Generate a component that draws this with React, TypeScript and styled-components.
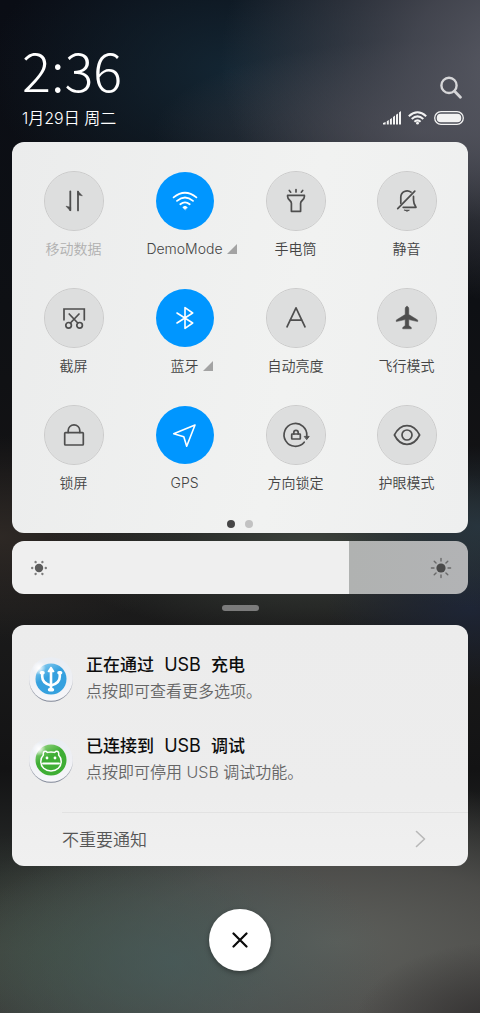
import React, { useState } from 'react';
import styled, { createGlobalStyle } from 'styled-components';

const GlobalStyle = createGlobalStyle`
  *, *::before, *::after { box-sizing: border-box; }
  body {
    margin: 0;
    background: #1b1b1c;
    font-family: Inter, "Noto Sans CJK SC", sans-serif;
    font-weight: 350;
    color: #4a4a4a;
  }
  button {
    margin: 0;
    padding: 0;
    border: 0;
    background: none;
    color: inherit;
    font: inherit;
    cursor: pointer;
  }
`;

const Screen = styled.main`
  display: flex;
  flex-direction: column;
  min-height: 100vh;
  padding: 30px 12px 42px;
  background:
    radial-gradient(ellipse 66% 24% at 112% 6%, #5c5e68 0%, rgba(84, 86, 96, 0.75) 40%, rgba(84, 86, 96, 0) 100%),
    radial-gradient(ellipse 56% 9% at 88% 13%, rgba(84, 82, 90, 0.7) 0%, rgba(84, 82, 90, 0) 100%),
    radial-gradient(ellipse 50% 15% at 48% 7%, rgba(20, 40, 54, 0.9) 0%, rgba(20, 40, 54, 0) 100%),
    radial-gradient(ellipse 30% 8% at 100% 52%, rgba(40, 54, 64, 0.9) 0%, rgba(40, 54, 64, 0) 100%),
    radial-gradient(ellipse 30% 8% at 98% 60%, rgba(30, 38, 56, 0.9) 0%, rgba(30, 38, 56, 0) 100%),
    radial-gradient(ellipse 55% 9% at 65% 54%, rgba(64, 70, 64, 0.95) 0%, rgba(64, 70, 64, 0) 100%),
    radial-gradient(ellipse 40% 10% at 0% 53%, rgba(48, 42, 38, 0.9) 0%, rgba(48, 42, 38, 0) 100%),
    radial-gradient(ellipse 30% 8% at 104% 101%, rgba(48, 46, 46, 0.9) 0%, rgba(48, 46, 46, 0) 100%),
    radial-gradient(ellipse 45% 12% at 36% 95%, rgba(70, 92, 92, 0.7) 0%, rgba(70, 92, 92, 0) 100%),
    radial-gradient(ellipse 45% 12% at 12% 94%, rgba(62, 76, 64, 0.7) 0%, rgba(62, 76, 64, 0) 100%),
    radial-gradient(ellipse 80% 16% at 70% 93%, #5c5e5a 0%, rgba(88, 87, 84, 0.75) 50%, rgba(80, 80, 80, 0) 100%),
    linear-gradient(180deg, #0a0d15 0%, #0e1014 30%, #121214 45%, #1b1b1b 60%, #131314 76%, #272a29 86%, #3c3d3b 94%, #3a3a3a 100%);
`;

const Header = styled.header`
  display: flex;
  justify-content: space-between;
  align-items: flex-end;
  height: 112px;
  padding: 0 4px 14px 10px;
  color: #fff;
`;

const Clock = styled.div`
  display: flex;
  flex-direction: column;
  gap: 9px;
`;

const Time = styled.time`
  font-family: "Noto Sans CJK SC", sans-serif;
  font-weight: 300;
  font-size: 54px;
  line-height: 60px;
`;

const DateText = styled.span`
  font-size: 16px;
  line-height: 20px;
`;

const HeaderTools = styled.div`
  display: flex;
  flex-direction: column;
  align-items: flex-end;
  gap: 12px;
  padding-bottom: 3px;
`;

const SearchButton = styled.button`
  display: flex;
  padding-right: 2px;
  color: #d6d6d8;
`;

const StatusRow = styled.div`
  display: flex;
  align-items: center;
  gap: 7px;
`;

const Panel = styled.section`
  border-radius: 12px;
  background: linear-gradient(100deg, #ebecec 0%, #f1f2f1 60%, #eeefef 100%);
`;

const TogglePanel = styled(Panel)`
  display: flex;
  flex-direction: column;
  gap: 27px;
  padding: 29px 6px 5px;
`;

const ToggleGrid = styled.div`
  display: grid;
  grid-template-columns: repeat(4, 1fr);
  row-gap: 29px;
`;

const Toggle = styled.button`
  display: flex;
  flex-direction: column;
  align-items: center;
  gap: 8px;
`;

const Disc = styled.span<{ $on: boolean }>`
  display: grid;
  place-items: center;
  width: 60px;
  height: 60px;
  border-radius: 50%;
  border: 1px solid ${p => (p.$on ? 'transparent' : '#cbcbcb')};
  background: ${p => (p.$on ? '#0096ff' : '#dddede')};
  background-clip: padding-box;
  color: ${p => (p.$on ? '#fff' : '#4e4e4e')};
`;

const ToggleLabel = styled.span<{ $muted?: boolean }>`
  display: grid;
  grid-template-columns: 1fr auto 1fr;
  column-gap: 4px;
  align-items: center;
  width: 100%;
  font-size: 14px;
  line-height: 20px;
  white-space: nowrap;
  color: ${p => (p.$muted ? '#b0b0b0' : '#444')};
`;

const LabelText = styled.span`
  grid-column: 2;
`;

const Expand = styled.svg`
  grid-column: 3;
`;

const Pager = styled.div`
  display: flex;
  justify-content: center;
  gap: 10px;
`;

const PageDot = styled.span<{ $current?: boolean }>`
  width: 8px;
  height: 8px;
  border-radius: 50%;
  background: ${p => (p.$current ? '#464646' : '#c2c2c2')};
`;

const Brightness = styled.label`
  display: grid;
  grid-template-columns: auto 1fr auto;
  align-items: center;
  height: 53px;
  margin-top: 8px;
  border-radius: 12px;
  overflow: hidden;
`;

const BrightnessRange = styled.input<{ $level: number }>`
  grid-area: 1 / 1 / 2 / 4;
  appearance: none;
  width: 100%;
  height: 53px;
  margin: 0;
  background: linear-gradient(
    to right,
    #efefef ${p => p.$level}%,
    #b0b2b1 ${p => p.$level}%,
    #b2b3b5 100%
  );
  &::-webkit-slider-thumb {
    appearance: none;
    width: 1px;
    height: 53px;
    background: transparent;
  }
`;

const BrightnessIcon = styled.svg<{ $end?: boolean }>`
  grid-row: 1;
  grid-column: ${p => (p.$end ? 3 : 1)};
  margin: 0 16px;
  pointer-events: none;
  color: #4a4a4a;
  z-index: 1;
`;

const Handle = styled.div`
  align-self: center;
  width: 37px;
  height: 6px;
  margin: 11px 0 14px;
  border-radius: 3px;
  background: #7b7b7b;
`;

const NoticePanel = styled(Panel)`
  padding-top: 13px;
  overflow: hidden;
  background: linear-gradient(180deg, #ececec 0%, #ededed 70%, #f0f0f0 100%);
`;

const NoticeList = styled.ul`
  margin: 0;
  padding: 0 0 12px;
  list-style: none;
`;

const Notice = styled.li`
  display: flex;
  align-items: center;
  gap: 12px;
  height: 81px;
  padding: 0 16px;
`;

const NoticeText = styled.div`
  display: flex;
  flex-direction: column;
  padding-bottom: 2px;
`;

const NoticeTitle = styled.h2`
  margin: 0;
  font-size: 17px;
  line-height: 26px;
  font-weight: 500;
  color: #0c0c0c;
  white-space: pre;
`;

const Latin = styled.span`
  font-size: 18px;
  font-weight: 400;
`;

const NoticeBody = styled.p`
  margin: 0;
  font-size: 16px;
  line-height: 26px;
  color: #666;
`;

const MoreRow = styled.button`
  display: flex;
  justify-content: space-between;
  align-items: center;
  width: calc(100% - 50px);
  height: 54px;
  margin-left: 50px;
  padding: 0 42px 2px 0;
  border-top: 1px solid #e2e2e2;
  font-size: 17px;
  color: #565656;
`;

const CloseButton = styled.button`
  display: grid;
  place-items: center;
  align-self: center;
  width: 62px;
  height: 62px;
  margin-top: 43px;
  border-radius: 50%;
  background: #fff;
  color: #0a0a0a;
  box-shadow: 0 2px 5px rgba(0, 0, 0, 0.35);
`;

const Glyph = ({ children, width = 1.7 }: { children: React.ReactNode; width?: number }) => (
  <svg
    width="30"
    height="30"
    viewBox="-15 -15 30 30"
    fill="none"
    stroke="currentColor"
    strokeWidth={width}
    strokeLinecap="round"
    strokeLinejoin="round"
    aria-hidden="true"
  >
    {children}
  </svg>
);

type ToggleItem = {
  label: string;
  icon: React.ReactNode;
  on?: boolean;
  muted?: boolean;
  expandable?: boolean;
};

const toggles: ToggleItem[] = [
  {
    label: '移动数据',
    muted: true,
    icon: (
      <Glyph width={1.8}>
        <path d="M-3.7 -9.6V9.2" />
        <path d="M4 9.4V-9.4" />
        <path d="M-3.7 9.8L-8 5.2L-3.7 6.2Z" fill="currentColor" strokeWidth={0.6} />
        <path d="M4 -9.8L8.3 -5.2L4 -6.2Z" fill="currentColor" strokeWidth={0.6} />
      </Glyph>
    ),
  },
  {
    label: 'DemoMode',
    on: true,
    expandable: true,
    icon: (
      <Glyph width={1.8}>
        <path d="M-11.4 -3.6Q0 -12.8 11.4 -3.6" />
        <path d="M-8 -0.1Q0 -6.8 8 -0.1" />
        <path d="M-4.7 3.3Q0 -0.6 4.7 3.3" />
        <path d="M0 8.6L-2.3 6.4Q0 3.8 2.3 6.4Z" fill="currentColor" strokeWidth={0.5} />
      </Glyph>
    ),
  },
  {
    label: '手电筒',
    icon: (
      <Glyph>
        <path d="M0 -11.4V-9M-6.7 -10.5L-5.3 -8.8M6.7 -10.5L5.3 -8.8" />
        <path d="M-8.4 -5.6H8.4V-4.4C8.4 -0.8 4.6 -0.8 4.6 2.2V10.3H-4.6V2.2C-4.6 -0.8 -8.4 -0.8 -8.4 -4.4Z" />
      </Glyph>
    ),
  },
  {
    label: '静音',
    icon: (
      <Glyph>
        <path d="M-6.2 2.2V-4A6.3 6.3 0 0 1 4 -8.8" />
        <path d="M6.5 -4.6V-1C6.5 2 7.4 4 9 6.3H-3.8" />
        <path d="M7.8 -9.8L-9.3 7.7" />
        <path d="M-2.4 9.2H2.4Q0 11.4 -2.4 9.2Z" fill="currentColor" strokeWidth={0.8} />
      </Glyph>
    ),
  },
  {
    label: '截屏',
    icon: (
      <Glyph>
        <path d="M-10 1.8V-9H10.3V1.8" strokeLinejoin="miter" />
        <circle cx="-5.4" cy="7.3" r="2.8" />
        <circle cx="5.6" cy="7.3" r="2.8" />
        <path d="M-3.6 5L5 -4M3.8 5L-4.8 -4" />
      </Glyph>
    ),
  },
  {
    label: '蓝牙',
    on: true,
    expandable: true,
    icon: (
      <Glyph width={1.6}>
        <path d="M-8 -5L7.7 5L0 10.4V-10.4L7.7 -5L-8 5" />
      </Glyph>
    ),
  },
  {
    label: '自动亮度',
    icon: (
      <Glyph>
        <path d="M-9 8.8L0 -10.2L9 8.8M-6 2.2H6" />
      </Glyph>
    ),
  },
  {
    label: '飞行模式',
    icon: (
      <Glyph width={0.5}>
        <path
          fill="currentColor"
          d="M0 -11.6C1.2 -11.6 1.8 -10.6 1.8 -9V-3.5L10.7 2V3.6L1.8 1.6V7.6L4.3 9.5V10.8H-4.3V9.5L-1.8 7.6V1.6L-10.7 3.6V2L-1.8 -3.5V-9C-1.8 -10.6 -1.2 -11.6 0 -11.6Z"
        />
      </Glyph>
    ),
  },
  {
    label: '锁屏',
    icon: (
      <Glyph>
        <rect x="-9.3" y="-2.4" width="18.6" height="12.4" rx="0.8" />
        <path d="M-5.8 -2.6V-4.4A5.8 5.8 0 0 1 5.8 -4.4V-2.6" />
      </Glyph>
    ),
  },
  {
    label: 'GPS',
    on: true,
    icon: (
      <Glyph width={1.6}>
        <path d="M10 -10L-11.3 -1.3L-1.2 1.8L1.7 11.3Z" />
      </Glyph>
    ),
  },
  {
    label: '方向锁定',
    icon: (
      <Glyph>
        <path d="M8.2 7.2A11.4 11.4 0 1 1 10.8 1" />
        <path d="M8.6 1.4H13.2L10.9 4.4Z" fill="currentColor" strokeWidth={0.9} />
        <rect x="-4.3" y="-1" width="8.6" height="5" rx="0.4" />
        <path d="M-2.2 -1V-2.4A2.2 2.2 0 0 1 2.2 -2.4V-1" />
      </Glyph>
    ),
  },
  {
    label: '护眼模式',
    icon: (
      <Glyph>
        <path d="M-12.6 0C-9.4 -6.4 -4.6 -9.4 0 -9.4S9.4 -6.4 12.6 0C9.4 6.4 4.6 9.4 0 9.4S-9.4 6.4 -12.6 0Z" />
        <circle r="5" />
      </Glyph>
    ),
  },
];

const Badge = ({ id, from, to, children }: { id: string; from: string; to: string; children: React.ReactNode }) => (
  <svg width="46" height="46" viewBox="-23 -23 46 46" aria-hidden="true">
    <defs>
      <linearGradient id={`${id}-rim`} x1="0" y1="0" x2="0" y2="1">
        <stop offset="0" stopColor="#e9edf3" />
        <stop offset="0.5" stopColor="#eff0f4" />
        <stop offset="1" stopColor="#f7f7fa" />
      </linearGradient>
      <linearGradient id={`${id}-edge`} x1="0" y1="0" x2="0" y2="1">
        <stop offset="0.3" stopColor="#8890a2" stopOpacity="0" />
        <stop offset="1" stopColor="#7d8494" />
      </linearGradient>
      <linearGradient id={`${id}-core`} x1="0.1" y1="0" x2="0.7" y2="1">
        <stop offset="0" stopColor={from} />
        <stop offset="0.45" stopColor={to} />
      </linearGradient>
      <radialGradient id={`${id}-gloss`}>
        <stop offset="0" stopColor="#fff" />
        <stop offset="1" stopColor="#fff" stopOpacity="0" />
      </radialGradient>
    </defs>
    <circle cy="0.8" r="22" fill={`url(#${id}-edge)`} />
    <circle r="21.8" fill={`url(#${id}-rim)`} />
    <circle r="15.5" fill={`url(#${id}-core)`} />
    <circle cx="-12" cy="-11" r="7" fill={`url(#${id}-gloss)`} />
    {children}
  </svg>
);

const UsbBadge = () => (
  <Badge id="usb" from="#8fd0f2" to="#36a1df">
    <g stroke="#fff" strokeWidth="2.6" fill="none" strokeLinejoin="round">
      <path d="M0 -9V11" />
      <path d="M-8.8 -5V-2.5C-8.8 3.5 -4 5.6 0 6.6C4 5.6 8.8 3.5 8.8 -2.5V-5" />
      <path d="M0 -11.5L-2.6 -7.6H2.6Z" fill="#fff" strokeWidth="1.6" />
      <path d="M-9.6 -6.2H-8M8 -6.2H9.6M-1.4 10.8H1.4" strokeLinecap="round" strokeWidth="3.6" />
    </g>
  </Badge>
);

const DebugBadge = () => (
  <Badge id="debug" from="#9bd88a" to="#3fae35">
    <g stroke="#fff" strokeWidth="1.5" fill="none" strokeLinejoin="round" strokeLinecap="round">
      <path d="M-7.6 -5C-8.4 -8.6 -5.6 -9.8 -3.6 -7.6Q0 -8.6 3.6 -7.6C5.6 -9.8 8.4 -8.6 7.6 -5C9.6 -3 10.2 -0.5 10.2 1.5C10.2 7 6 11 0 11S-10.2 7 -10.2 1.5C-10.2 -0.5 -9.6 -3 -7.6 -5Z" />
      <path d="M-8 3.4H8" strokeWidth="2" />
    </g>
    <circle cx="-4" cy="-2" r="1.4" fill="#fff" />
    <circle cx="4" cy="-2" r="1.4" fill="#fff" />
  </Badge>
);

const notices = [
  { icon: <UsbBadge />, title: ['正在通过', 'USB', '充电'], body: '点按即可查看更多选项。' },
  { icon: <DebugBadge />, title: ['已连接到', 'USB', '调试'], body: '点按即可停用 USB 调试功能。' },
];

const StatusIcons = () => (
  <StatusRow>
    <svg width="18" height="14" viewBox="0 0 18 14" fill="#f2f2f2" aria-label="信号">
      <path d="M0 13.5V12L2.6 11V13.5ZM3.8 13.5V10.2L5.8 9.1V13.5ZM6.9 13.5V8.2L8.9 7V13.5ZM10 13.5V6L12 4.6V13.5ZM13 13.5V3.8L15 2.4V13.5ZM16 13.5V1.4L18 0V13.5Z" />
    </svg>
    <svg width="19" height="14" viewBox="0 0 19 14" fill="none" stroke="#f2f2f2" strokeWidth="2" aria-label="无线网络">
      <path d="M0.8 5.2Q9.5 -2.6 18.2 5.2" />
      <path d="M3.7 8.1Q9.5 2.6 15.3 8.1" />
      <path d="M6.4 10.8Q9.5 7.9 12.6 10.8" />
      <circle cx="9.5" cy="12.2" r="1.4" fill="#f2f2f2" stroke="none" />
    </svg>
    <svg width="30" height="14" viewBox="0 0 30 14" aria-label="电池">
      <rect x="0.7" y="0.7" width="28.6" height="12.6" rx="6.3" fill="none" stroke="#f2f2f2" strokeWidth="1.3" />
      <rect x="2.8" y="2.8" width="24.4" height="8.4" rx="3.8" fill="#f2f2f2" />
    </svg>
  </StatusRow>
);

export default function App() {
  const [active, setActive] = useState(() => toggles.map(t => Boolean(t.on)));
  const [level, setLevel] = useState(74);

  const flip = (index: number) => setActive(prev => prev.map((on, i) => (i === index ? !on : on)));

  return (
    <Screen>
      <GlobalStyle />
      <Header>
        <Clock>
          <Time>2:36</Time>
          <DateText>1月29日 周二</DateText>
        </Clock>
        <HeaderTools>
          <SearchButton aria-label="搜索">
            <svg width="22" height="23" viewBox="0 0 22 23" fill="none" stroke="currentColor" strokeWidth="2.4" strokeLinecap="round">
              <circle cx="9" cy="9.4" r="7.6" />
              <path d="M14.6 15.2L20.4 21.2" strokeWidth="2.8" />
            </svg>
          </SearchButton>
          <StatusIcons />
        </HeaderTools>
      </Header>

      <TogglePanel>
        <ToggleGrid>
          {toggles.map((t, i) => (
            <Toggle key={t.label} aria-pressed={active[i]} onClick={() => flip(i)}>
              <Disc $on={active[i]}>{t.icon}</Disc>
              <ToggleLabel $muted={t.muted}>
                <LabelText>{t.label}</LabelText>
                {t.expandable && (
                  <Expand width="10" height="10" viewBox="0 0 10 10" fill="#a3a3a3" aria-hidden="true">
                    <path d="M10 0V10H0Z" />
                  </Expand>
                )}
              </ToggleLabel>
            </Toggle>
          ))}
        </ToggleGrid>
        <Pager>
          <PageDot $current />
          <PageDot />
        </Pager>
      </TogglePanel>

      <Brightness>
        <BrightnessRange
          type="range"
          min={0}
          max={100}
          value={level}
          $level={level}
          aria-label="亮度"
          onChange={e => setLevel(Number(e.target.value))}
        />
        <BrightnessIcon width="22" height="22" viewBox="-11 -11 22 22" fill="currentColor" aria-hidden="true">
          <circle r="4.2" fill="#5c5c5c" />
          {[0, 60, 120, 180, 240, 300].map(a => (
            <circle key={a} cx="6.8" r="1.2" fill="#7c7c7c" transform={`rotate(${a})`} />
          ))}
        </BrightnessIcon>
        <BrightnessIcon $end width="22" height="22" viewBox="-11 -11 22 22" aria-hidden="true">
          <circle r="4.6" fill="currentColor" />
          {[0, 45, 90, 135, 180, 225, 270, 315].map(a => (
            <path key={a} d="M7 0H9.6" stroke="#6a6a6a" strokeWidth="1.4" strokeLinecap="round" transform={`rotate(${a})`} />
          ))}
        </BrightnessIcon>
      </Brightness>

      <Handle />

      <NoticePanel>
        <NoticeList>
          {notices.map(n => (
            <Notice key={n.body}>
              {n.icon}
              <NoticeText>
                <NoticeTitle>
                  {n.title[0]}
                  <Latin>{`  ${n.title[1]}  `}</Latin>
                  {n.title[2]}
                </NoticeTitle>
                <NoticeBody>{n.body}</NoticeBody>
              </NoticeText>
            </Notice>
          ))}
        </NoticeList>
        <MoreRow>
          不重要通知
          <svg width="11" height="18" viewBox="0 0 11 18" fill="none" stroke="#b8b8b8" strokeWidth="1.6" strokeLinecap="round" strokeLinejoin="round" aria-hidden="true">
            <path d="M1.5 1.5L9.5 9L1.5 16.5" />
          </svg>
        </MoreRow>
      </NoticePanel>

      <CloseButton aria-label="关闭">
        <svg width="16" height="16" viewBox="0 0 16 16" fill="none" stroke="currentColor" strokeWidth="2.2" strokeLinecap="round" aria-hidden="true">
          <path d="M1.5 1.5L14.5 14.5M14.5 1.5L1.5 14.5" />
        </svg>
      </CloseButton>
    </Screen>
  );
}
